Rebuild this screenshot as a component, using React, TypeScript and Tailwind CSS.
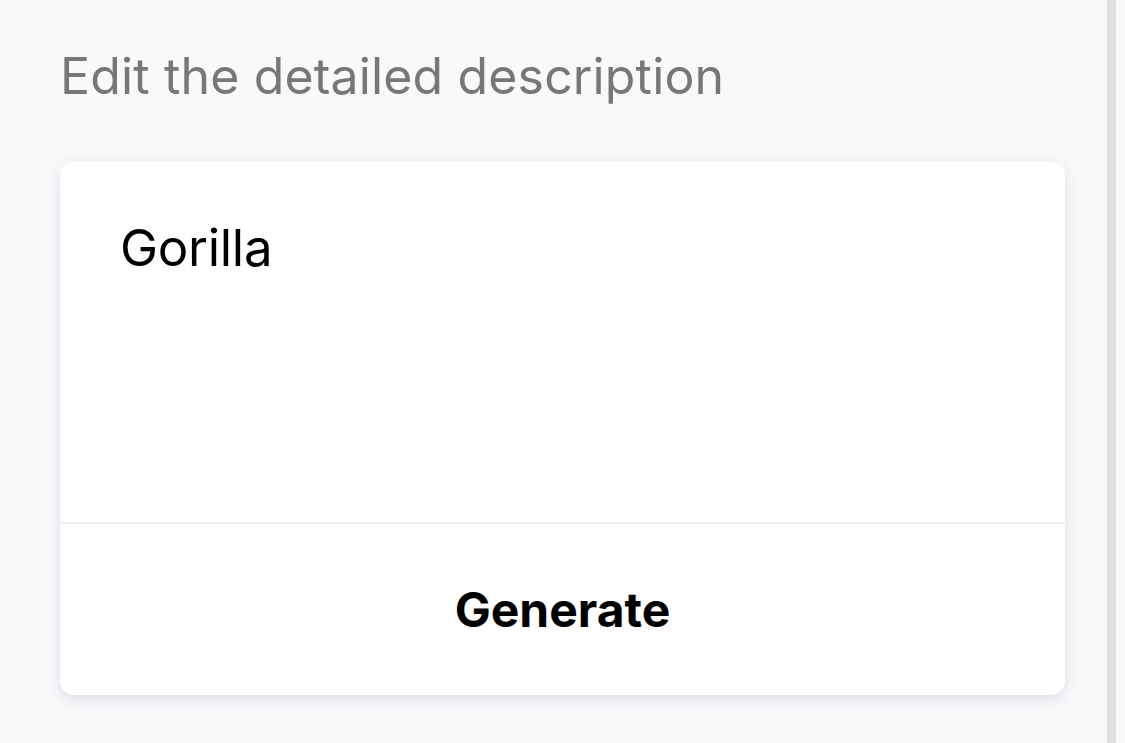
export default function App() {
  return (
    <div
      className="flex h-[743px] w-full overflow-hidden bg-[#f9f9fb]"
      style={{ fontFamily: "Inter, 'Noto Sans', sans-serif" }}
    >
      <main className="flex w-[1107px] flex-col pl-[60px] pr-[42px] pt-[48px]">
        <h1 className="text-[50px] leading-[56px] font-normal text-[#777777] tracking-[0.15px]">
          Edit the detailed description
        </h1>
        <div className="mt-[58px] flex flex-col overflow-hidden rounded-[14px] bg-white shadow-[0_4px_14px_rgba(90,90,160,0.18)]">
          <div className="h-[360px] px-[60px] pt-[56px]">
            <p className="text-[51px] leading-[60px] tracking-[-0.3px] text-black">Gorilla</p>
          </div>
          <div className="h-[2px] bg-[#efefef]" />
          <button
            type="button"
            className="flex h-[171px] items-center justify-center text-[48px] font-bold text-black"
          >
            Generate
          </button>
        </div>
      </main>
      <div className="w-[9px] bg-[#e0e0e2]" />
      <div className="flex-1" />
    </div>
  );
}
